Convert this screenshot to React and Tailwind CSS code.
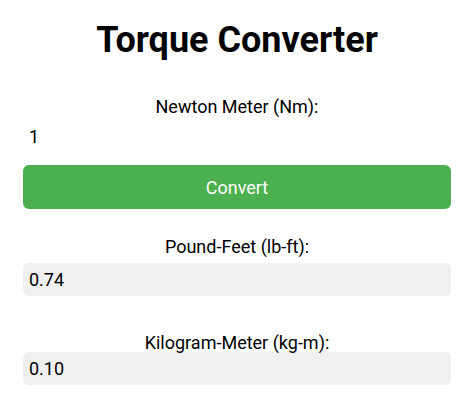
export default function App() {
  return (
    <div className="min-h-screen bg-white text-black" style={{ fontFamily: "Roboto, 'Noto Sans', sans-serif" }}>
      <div className="mx-[23px] pt-[18px]">
        <h1 className="text-center text-[36px] font-bold leading-[44px]">Torque Converter</h1>
        <div className="mt-[34px] text-center text-[18px] leading-[22px]">Newton Meter (Nm):</div>
        <div className="mt-[5px] h-[28px] px-[6px] text-[18px] leading-[28px]">1</div>
        <button className="mt-[14px] flex h-[44px] w-full items-center justify-center rounded-[6px] bg-[#4caf50] text-[18px] text-white">
          Convert
        </button>
        <div className="mt-[27px] text-center text-[18px] leading-[22px]">Pound-Feet (lb-ft):</div>
        <div className="mt-[5px] h-[33px] rounded-[6px] bg-[#f0f0f0] px-[6px] text-[18px] leading-[33px]">0.74</div>
        <div className="mt-[36px] text-center text-[18px] leading-[22px]">Kilogram-Meter (kg-m):</div>
        <div className="mt-[-2px] h-[33px] rounded-[6px] bg-[#f0f0f0] px-[6px] text-[18px] leading-[33px]">0.10</div>
      </div>
    </div>
  );
}
